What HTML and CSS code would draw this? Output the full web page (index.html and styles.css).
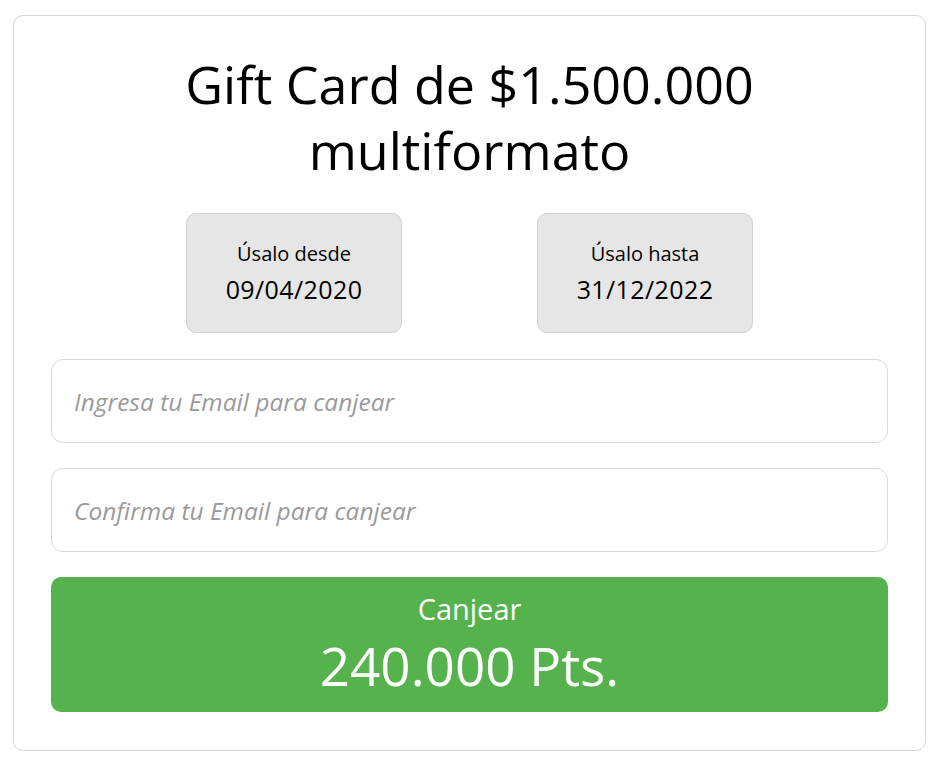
FILE: index.html
```html
<!DOCTYPE html>
<html lang="es">
<head>
<meta charset="UTF-8">
<meta name="viewport" content="width=device-width, initial-scale=1.0">
<title>Canjear Gift Card</title>
<link rel="stylesheet" href="styles.css">
</head>
<body>
  <section class="card">
    <h1 class="title">Gift Card de $1.500.000 multiformato</h1>

    <!-- Fechas de vigencia -->
    <div class="dates">
      <div class="date-box">
        <span class="date-label">Úsalo desde</span>
        <span class="date-value">09/04/2020</span>
      </div>
      <div class="date-box">
        <span class="date-label">Úsalo hasta</span>
        <span class="date-value">31/12/2022</span>
      </div>
    </div>

    <form class="redeem-form">
      <input type="email" class="email-input" placeholder="Ingresa tu Email para canjear">
      <input type="email" class="email-input" placeholder="Confirma tu Email para canjear">
      <button type="submit" class="redeem-btn">
        <span class="btn-label">Canjear</span>
        <span class="btn-points">240.000 Pts.</span>
      </button>
    </form>
  </section>
</body>
</html>
```

FILE: styles.css
```css
body { margin: 0; padding: 15px 13px 17px; background: #fff; font-family: "Open Sans", "Noto Sans", sans-serif; color: #000; }
.card { border: 1px solid #d6d6d6; border-radius: 10px; padding: 35px 37px 38px; }
.title { margin: 0; font-size: 52px; font-weight: 400; line-height: 66px; text-align: center; padding: 0 100px; }
.dates { display: flex; justify-content: center; gap: 135px; margin: 30px 0 26px; }
.date-box { width: 214px; height: 118px; background: #e6e6e6; border: 1px solid #d2d2d2; border-radius: 10px; display: flex; flex-direction: column; align-items: center; justify-content: center; gap: 5px; }
.date-label { font-size: 20px; }
.date-value { font-size: 25px; letter-spacing: 0.4px; }
.redeem-form { display: flex; flex-direction: column; gap: 25px; }
.email-input { box-sizing: border-box; width: 100%; height: 84px; border: 1px solid #d9d9d9; border-radius: 12px; padding: 0 22px; font-family: inherit; font-size: 24.5px; font-style: italic; color: #333; outline: none; }
.email-input::placeholder { color: #9a9a9a; }
.redeem-btn { box-sizing: border-box; height: 135px; border: 0; border-radius: 10px; background: #56b24d; color: #fff; font-family: inherit; display: flex; flex-direction: column; align-items: center; justify-content: center; gap: 4px; padding: 2px 0 0; cursor: pointer; }
.btn-label { font-size: 29px; line-height: 1.3; }
.btn-points { font-size: 53px; line-height: 1.3; }
```
